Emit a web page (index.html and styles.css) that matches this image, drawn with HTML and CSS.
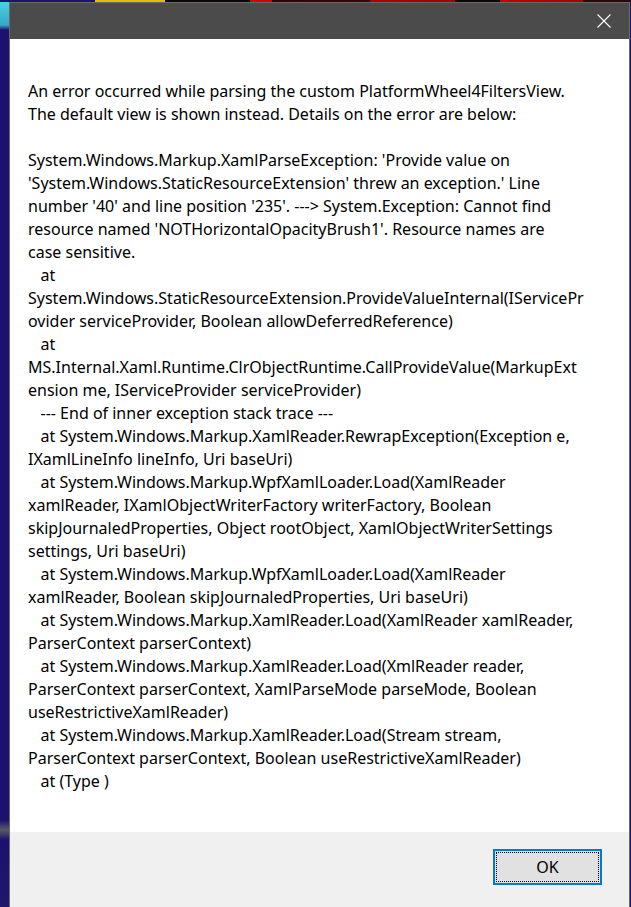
FILE: index.html
```html
<!DOCTYPE html>
<html lang="en">
  <head>
    <meta charset="UTF-8" />
    <meta name="viewport" content="width=device-width, initial-scale=1.0" />
    <title>Error</title>
    <link rel="stylesheet" href="styles.css">
  </head>
  <body>
    <div class="desktop">
      <div class="dialog">
        <div class="title-bar">
          <button class="close-btn" aria-label="Close">
            <svg width="14" height="14" viewBox="0 0 14 14" fill="none" stroke="#fff" stroke-width="1.1">
              <path d="M0.5 0.5L13.5 13.5M13.5 0.5L0.5 13.5" />
            </svg>
          </button>
        </div>

        <div class="content">
          <div class="message">An error occurred while parsing the custom PlatformWheel4FiltersView.
The default view is shown instead. Details on the error are below:

System.Windows.Markup.XamlParseException: 'Provide value on
'System.Windows.StaticResourceExtension' threw an exception.' Line
number '40' and line position '235'. ---&gt; System.Exception: Cannot find
resource named 'NOTHorizontalOpacityBrush1'. Resource names are
case sensitive.
   at
System.Windows.StaticResourceExtension.ProvideValueInternal(IServicePr
ovider serviceProvider, Boolean allowDeferredReference)
   at
MS.Internal.Xaml.Runtime.ClrObjectRuntime.CallProvideValue(MarkupExt
ension me, IServiceProvider serviceProvider)
   --- End of inner exception stack trace ---
   at System.Windows.Markup.XamlReader.RewrapException(Exception e,
IXamlLineInfo lineInfo, Uri baseUri)
   at System.Windows.Markup.WpfXamlLoader.Load(XamlReader
xamlReader, IXamlObjectWriterFactory writerFactory, Boolean
skipJournaledProperties, Object rootObject, XamlObjectWriterSettings
settings, Uri baseUri)
   at System.Windows.Markup.WpfXamlLoader.Load(XamlReader
xamlReader, Boolean skipJournaledProperties, Uri baseUri)
   at System.Windows.Markup.XamlReader.Load(XamlReader xamlReader,
ParserContext parserContext)
   at System.Windows.Markup.XamlReader.Load(XmlReader reader,
ParserContext parserContext, XamlParseMode parseMode, Boolean
useRestrictiveXamlReader)
   at System.Windows.Markup.XamlReader.Load(Stream stream,
ParserContext parserContext, Boolean useRestrictiveXamlReader)
   at (Type )</div>
        </div>

        <div class="footer">
          <button class="ok-btn">OK</button>
        </div>
      </div>
    </div>
  </body>
</html>
```

FILE: styles.css
```css
html,
body {
  margin: 0;
  height: 100%;
  overflow: hidden;
}

body {
  font-family: "Segoe UI", "Noto Sans", sans-serif;
  background: #1c1170;
}

.desktop {
  height: 100vh;
  box-sizing: border-box;
  padding: 2px 1px 0 9px;
  display: flex;
  background:
    linear-gradient(to right,
      #1c1170 0, #1c1170 95px,
      #e2c000 95px, #e2c000 165px,
      #0a0606 165px, #0a0606 250px,
      #d10000 250px, #d10000 272px,
      #2a0606 272px, #3a0505 370px,
      #b00000 370px, #a00000 455px,
      #0a0606 455px, #0a0606 500px,
      #c00000 500px, #a80000 583px,
      #2a0808 583px) top / 100% 2px no-repeat,
    linear-gradient(to bottom, #46d6e0 0, #3aa8c8 25px, #1c1170 30px, #1c1170 820px, #5a5a62 830px, #1c1170 840px, #20186a 100%) left / 9px 100% no-repeat,
    #1c1170;
}

.dialog {
  flex: 1;
  display: flex;
  flex-direction: column;
  border: 1px solid #6a6a6a;
  border-bottom: none;
  background: #fff;
}

.title-bar {
  height: 36px;
  background: #4b4b4b;
  display: flex;
  justify-content: flex-end;
  align-items: center;
  padding-right: 18px;
}

.close-btn {
  display: flex;
  padding: 0;
  border: none;
  background: none;
}

.content {
  flex: 1;
  padding: 41px 0 0 18px;
}

.message {
  white-space: pre;
  font-size: 16px;
  line-height: 23px;
  color: #000;
}

.footer {
  height: 75px;
  background: #f0f0f0;
  display: flex;
  justify-content: flex-end;
  align-items: flex-start;
  padding-right: 27px;
}

.ok-btn {
  margin-top: 17px;
  width: 109px;
  height: 36px;
  border: 2px solid #0078d7;
  background: #e1e1e1;
  outline: 1px dotted #000;
  outline-offset: -4px;
  font-family: "Segoe UI", "Noto Sans", sans-serif;
  font-size: 16px;
  color: #000;
  padding: 0;
}
```
